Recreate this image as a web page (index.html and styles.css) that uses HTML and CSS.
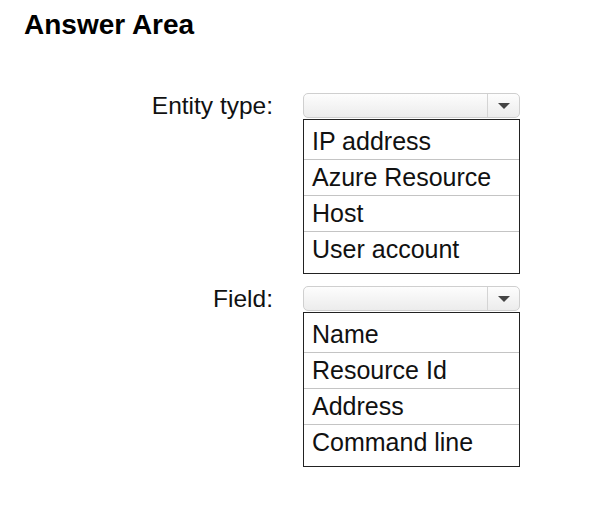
FILE: index.html
```html
<!DOCTYPE html>
<html lang="en">
<head>
  <meta charset="UTF-8" />
  <title>Answer Area</title>
  <link rel="stylesheet" href="styles.css">
</head>
<body>

  <h2 class="title">Answer Area</h2>

  <div class="answer-area">
    <div class="label">Entity type:</div>
    <div class="control">
      <div class="select"><span class="arrow"></span></div>
      <ul class="options">
        <li>IP address</li>
        <li>Azure Resource</li>
        <li>Host</li>
        <li>User account</li>
      </ul>
    </div>

    <div class="label">Field:</div>
    <div class="control">
      <div class="select"><span class="arrow"></span></div>
      <ul class="options">
        <li>Name</li>
        <li>Resource Id</li>
        <li>Address</li>
        <li>Command line</li>
      </ul>
    </div>
  </div>

</body>
</html>
```

FILE: styles.css
```css
* { margin: 0; padding: 0; box-sizing: border-box; }

body {
  font-family: 'Liberation Sans', Arial, sans-serif;
  background: #fff;
  color: #111;
  width: 594px;
  height: 520px;
  overflow: hidden;
}

.title {
  font-size: 28px;
  font-weight: bold;
  line-height: 32px;
  padding: 9px 0 0 24px;
  color: #000;
}

.answer-area {
  display: grid;
  grid-template-columns: 273px 217px;
  column-gap: 30px;
  row-gap: 12px;
  margin-top: 52px;
}

.label {
  text-align: right;
  font-size: 24.5px;
  line-height: 25px;
  height: 25px;
}

.control {
  display: flex;
  flex-direction: column;
  gap: 1px;
}

.select {
  height: 25px;
  border: 1px solid #cfcfcf;
  border-radius: 5px;
  background: linear-gradient(to bottom, #fdfdfd, #ececec);
  display: flex;
  justify-content: flex-end;
}

.arrow {
  width: 32px;
  border-left: 1px solid #d4d4d4;
  display: flex;
  align-items: center;
  justify-content: center;
}

.arrow::after {
  content: "";
  border-left: 6px solid transparent;
  border-right: 6px solid transparent;
  border-top: 6px solid #444;
}

.options {
  list-style: none;
  border: 1px solid #222;
  padding: 4px 0 5px;
}

.options li {
  font-size: 25px;
  line-height: 34px;
  height: 36px;
  padding-left: 8px;
  border-bottom: 1px solid #c4c4c4;
  white-space: nowrap;
}

.options li:last-child {
  border-bottom: none;
}
```
